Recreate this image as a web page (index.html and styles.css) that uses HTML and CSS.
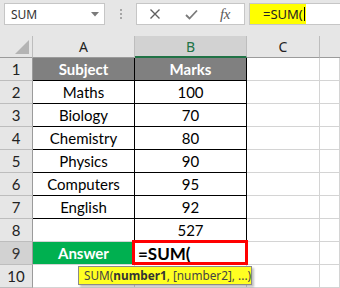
FILE: index.html
```html
<!DOCTYPE html>
<html>
<head>
<meta charset="utf-8">
<link rel="stylesheet" href="styles.css">
</head>
<body>
<div class="app">
  <div class="topbar">
    <div class="namebox">
      <span class="nb-text">SUM</span>
      <svg class="nb-arrow" width="8" height="5" viewBox="0 0 8 5"><path d="M0 0 L8 0 L4 4.5 Z" fill="#7a7a7a"/></svg>
    </div>
    <div class="dots"><i></i><i></i><i></i></div>
    <div class="fbtns">
      <svg class="ic" width="12" height="12" viewBox="0 0 12 12"><path d="M1.5 1.5 L10.5 10.5 M10.5 1.5 L1.5 10.5" stroke="#5f5f5f" stroke-width="1.4" fill="none"/></svg>
      <svg class="ic" width="13" height="11" viewBox="0 0 13 11"><path d="M1 6 L4.5 9.5 L12 1.5" stroke="#7a7a7a" stroke-width="1.8" fill="none"/></svg>
      <span class="fx">fx</span>
    </div>
    <div class="finput"><span class="fhl">=SUM(<span class="caret"></span></span></div>
  </div>
  <div class="sheet">
    <div class="corner"><span class="tri"></span></div>
    <div class="ch">A</div>
    <div class="ch sel">B</div>
    <div class="ch">C</div>
    <div class="ch last"></div>

    <div class="rh">1</div>
    <div class="c b hd">Subject</div>
    <div class="c b hd">Marks</div>
    <div class="c"></div>
    <div class="c"></div>

    <div class="rh">2</div>
    <div class="c b">Maths</div>
    <div class="c b">100</div>
    <div class="c"></div>
    <div class="c"></div>

    <div class="rh">3</div>
    <div class="c b">Biology</div>
    <div class="c b">70</div>
    <div class="c"></div>
    <div class="c"></div>

    <div class="rh">4</div>
    <div class="c b">Chemistry</div>
    <div class="c b">80</div>
    <div class="c"></div>
    <div class="c"></div>

    <div class="rh">5</div>
    <div class="c b">Physics</div>
    <div class="c b">90</div>
    <div class="c"></div>
    <div class="c"></div>

    <div class="rh">6</div>
    <div class="c b">Computers</div>
    <div class="c b">95</div>
    <div class="c"></div>
    <div class="c"></div>

    <div class="rh">7</div>
    <div class="c b">English</div>
    <div class="c b">92</div>
    <div class="c"></div>
    <div class="c"></div>

    <div class="rh">8</div>
    <div class="c rb"></div>
    <div class="c b">527</div>
    <div class="c"></div>
    <div class="c"></div>

    <div class="rh sel">9</div>
    <div class="c ans">Answer</div>
    <div class="c active">=SUM(
      <div class="tip">SUM(<b>number1</b>, [number2], ...)</div>
    </div>
    <div class="c"></div>
    <div class="c"></div>

    <div class="rh">10</div>
    <div class="c"></div>
    <div class="c"></div>
    <div class="c"></div>
    <div class="c"></div>
  </div>
</div>
</body>
</html>
```

FILE: styles.css
```css
* { box-sizing: border-box; }
html, body { margin: 0; padding: 0; background: #ffffff; }
.app { width: 340px; height: 288px; overflow: hidden; position: relative; }

.topbar {
  height: 36px;
  background: #e6e6e6;
  display: flex;
  align-items: flex-start;
  padding: 3px 0 0 4px;
}
.namebox {
  width: 101px; height: 22px;
  background: #fff;
  border: 1px solid #c6c6c6;
  display: flex; align-items: center; justify-content: space-between;
  padding: 0 5px 0 6px;
}
.nb-text { font-family: "Noto Sans", sans-serif; font-size: 12px; color: #333; }
.dots { width: 31px; height: 22px; display: flex; flex-direction: column; align-items: center; justify-content: center; gap: 2px; }
.dots i { display: block; width: 2px; height: 2px; background: #a6a6a6; }
.fbtns {
  width: 109px; height: 22px;
  background: #fff;
  border: 1px solid #c6c6c6;
  display: flex; align-items: center;
  padding-left: 12px; gap: 24px;
}
.fx { font-family: "Liberation Serif", serif; font-style: italic; font-size: 15px; color: #5a5a5a; margin-left: -2px; letter-spacing: -0.5px; }
.finput {
  margin-left: 4px;
  flex: 1; height: 22px;
  background: #fff;
  border: 1px solid #c6c6c6;
  border-right: none;
}
.fhl {
  display: flex; align-items: center;
  width: 56px; height: 20px;
  background: #ffff00;
  padding-left: 13px;
  font-family: "Noto Sans", sans-serif; font-size: 13px; color: #222;
}
.caret { display: inline-block; width: 1px; height: 14px; background: #000; margin-left: 1px; }

.sheet {
  display: grid;
  grid-template-columns: 33px 102px 112px 73px 20px;
  grid-template-rows: 22px repeat(10, 23px);
  font-family: Lato, "Liberation Sans", sans-serif;
  font-size: 15px;
  color: #000;
}
.corner {
  background: #e6e6e6;
  border-right: 1px solid #bdbdbd;
  border-bottom: 1px solid #9b9b9b;
  position: relative;
}
.tri {
  position: absolute; right: 3px; bottom: 3px;
  width: 0; height: 0;
  border-left: 14px solid transparent;
  border-bottom: 14px solid #b4b4b4;
}
.ch {
  background: #e6e6e6;
  border-right: 1px solid #bdbdbd;
  border-bottom: 1px solid #9b9b9b;
  display: flex; align-items: center; justify-content: center;
  font-family: "Noto Sans", sans-serif; font-size: 14px; color: #222;
}
.ch.sel { background: #d2d2d2; color: #217346; border-bottom: 2px solid #217346; }
.ch.last { border-right: none; }
.rh {
  background: #e6e6e6;
  border-right: 1px solid #9b9b9b;
  border-bottom: 1px solid #bdbdbd;
  display: flex; align-items: center; justify-content: center;
  font-size: 15px; color: #222;
}
.rh.sel { background: #d2d2d2; color: #333; }
.c {
  border-right: 1px solid #d4d4d4;
  border-bottom: 1px solid #d4d4d4;
  display: flex; align-items: center; justify-content: center;
}
.c.b { border-right-color: #000; border-bottom-color: #000; }
.c.rb { border-right-color: #000; }
.c.hd { background: #808080; color: #fff; font-weight: 700; }
.c.ans { background: #00b050; color: #fff; font-weight: 700; }
.c.active {
  position: relative;
  justify-content: flex-start;
  padding-left: 3px;
  font-weight: 700; font-size: 17px;
}
.c.active::after {
  content: "";
  position: absolute;
  left: -3px; top: -2px; right: -2px; bottom: -1px;
  border: 3px solid #ff0000;
}
.tip {
  position: absolute;
  left: -57px; top: 24px;
  width: 174px; height: 19px;
  background: #ffff22;
  border: 1px solid #8a8a8a;
  box-shadow: 2px 2px 2px rgba(0,0,0,0.25);
  font-family: "Noto Sans", sans-serif; font-size: 11.8px; font-weight: 400;
  color: #444;
  padding-left: 5px;
  line-height: 17px;
  white-space: nowrap;
  z-index: 2;
}
.tip b { font-weight: 700; color: #333; }
```
